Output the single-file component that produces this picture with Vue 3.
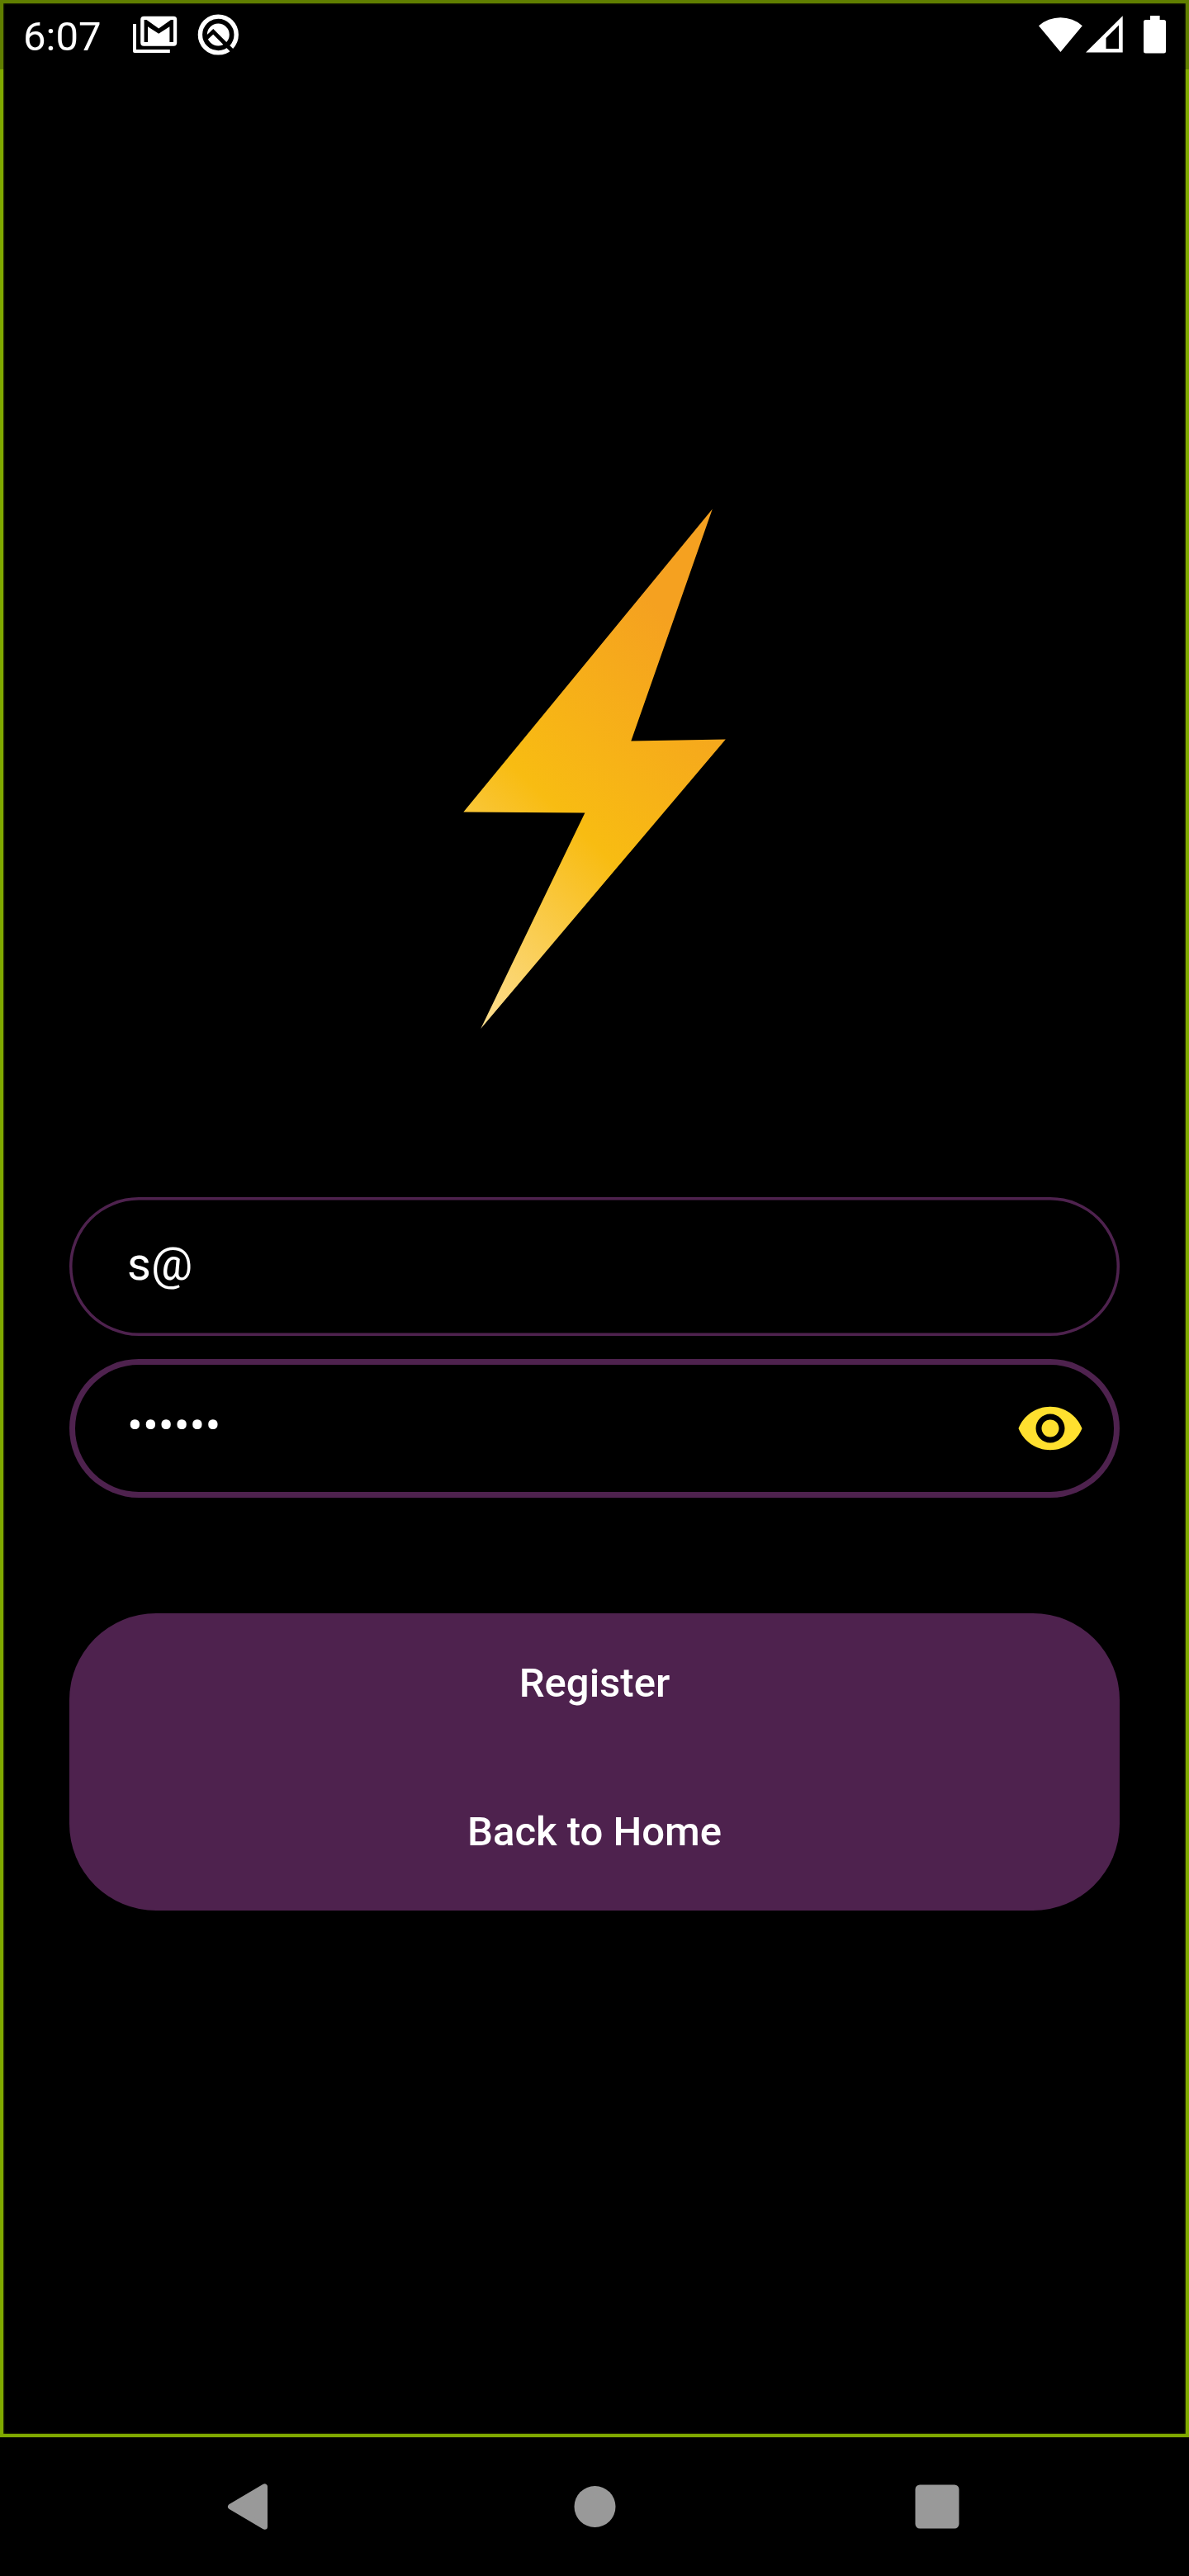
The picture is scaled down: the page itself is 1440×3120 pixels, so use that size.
<script setup>
import { ref } from 'vue'

const time = '6:07'
const email = ref('s@')
const password = ref('••••••')
const actions = ['Register', 'Back to Home']
</script>

<template>
  <div class="device">
    <div class="screen">
      <header class="status">
        <span class="time">{{ time }}</span>
        <svg class="mail" width="54" height="46" viewBox="0 0 54 46">
          <path d="M2 10V42.9H44.8" fill="none" stroke="#fff" stroke-width="4" stroke-linejoin="round" />
          <rect x="9.2" y=".8" width="44" height="36" rx="4" fill="#fff" />
          <path d="M13.6 32V5H16.5L31.2 15.4 46 5H49V32H44.4V13.2L31.2 21.8 18 13.2V32Z" fill="#000" />
        </svg>
        <svg class="q" width="50" height="50" viewBox="0 0 50 50">
          <circle cx="25.3" cy="25" r="21.9" fill="none" stroke="#fff" stroke-width="5.4" />
          <circle cx="25.3" cy="25" r="13.5" fill="#fff" />
          <path d="M10.5 29.5L19.2 21.4 43 45.2" fill="none" stroke="#000" stroke-width="4.8" />
        </svg>
        <span class="spacer"></span>
        <svg width="156" height="46" viewBox="0 0 156 46" fill="#fff">
          <path d="M27.4 44L1 12.2A40 40 0 0 1 53.8 12.2Z" />
          <path fill-rule="evenodd" d="M58 44.5L102.7.2V44.5ZM82.5 27V40H98V11.5Z" />
          <path d="M136 0H147.6V5H152.5A2.5 2.5 0 0 1 155 7.5V43A2.5 2.5 0 0 1 152.5 45.5H130.5A2.5 2.5 0 0 1 128 43V7.5A2.5 2.5 0 0 1 130.5 5H136Z" />
        </svg>
      </header>

      <main class="content">
        <svg class="bolt" width="318" height="632" viewBox="561 615 318 632">
          <defs>
            <linearGradient id="boltFill" gradientUnits="userSpaceOnUse" x1="582" y1="1246" x2="941" y2="874">
              <stop offset="0" stop-color="#fcde91" />
              <stop offset=".495" stop-color="#f8bc12" />
              <stop offset="1" stop-color="#f5a120" />
            </linearGradient>
          </defs>
          <path d="M862.8 616.5L764.3 897.6 878.8 895.4 582.2 1246 708.4 984.4 561.3 983.6Z" fill="url(#boltFill)" />
        </svg>

        <div class="field">
          <span class="value">{{ email }}</span>
        </div>
        <div class="field focused">
          <span class="value">{{ password }}</span>
          <svg class="eye" width="84" height="84" viewBox="0 0 24 24">
            <path fill="#ffe02f" d="M12 4.5C7 4.5 2.73 7.61 1 12c1.73 4.39 6 7.5 11 7.5s9.27-3.11 11-7.5c-1.73-4.39-6-7.5-11-7.5zM12 17c-2.76 0-5-2.24-5-5s2.24-5 5-5 5 2.24 5 5-2.24 5-5 5zm0-8c-1.66 0-3 1.34-3 3s1.34 3 3 3 3-1.34 3-3-1.34-3-3-3z" />
          </svg>
        </div>

        <div class="actions">
          <button v-for="label in actions" :key="label" type="button">{{ label }}</button>
        </div>
      </main>
      <div class="glow"></div>
      <div class="scrim"></div>
    </div>

    <nav class="nav">
      <svg width="56" height="60" viewBox="0 0 56 60">
        <path d="M7.5 30L48.5 5.8V54.2Z" fill="#999" stroke="#999" stroke-width="7" stroke-linejoin="round" />
      </svg>
      <svg width="56" height="60" viewBox="0 0 56 60"><circle cx="30.5" cy="30" r="25" fill="#999" /></svg>
      <svg width="56" height="60" viewBox="0 0 56 60"><rect x="1.5" y="3.5" width="53" height="53" rx="5.5" fill="#999" /></svg>
    </nav>
  </div>
</template>

<style>
body {
  margin: 0;
  background: #000;
}
</style>

<style scoped>
.device {
  width: 1440px;
  height: 3120px;
  display: flex;
  flex-direction: column;
  background: #000;
  color: #fff;
  font-family: Roboto, sans-serif;
}
.screen {
  position: relative;
  height: 2952px;
  display: flex;
  flex-direction: column;
}
.status {
  height: 84px;
  box-sizing: border-box;
  display: flex;
  align-items: flex-start;
  padding: 19px 27px 0 28px;
}
.status svg {
  flex: none;
}
.time {
  width: 133px;
  margin-top: -3px;
  font-size: 49px;
  line-height: 57px;
}
.q {
  margin: -2px 0 0 24px;
}
.spacer {
  flex: 1;
}
.content {
  flex: 1;
  display: flex;
  flex-direction: column;
  align-items: stretch;
  padding: 531px 84px 0;
}
.bolt {
  align-self: center;
  margin-bottom: 202.75px;
}
.field {
  height: 168px;
  margin-bottom: 28px;
  box-sizing: border-box;
  border-radius: 84px;
  box-shadow: inset 0 0 0 3.5px #4e224e;
  display: flex;
  align-items: center;
  justify-content: space-between;
  padding: 0 42px 0 70px;
}
.field.focused {
  box-shadow: inset 0 0 0 7px #4e224e;
}
.value {
  margin-bottom: 6px;
  font-size: 56px;
  line-height: 66px;
}
.actions {
  box-sizing: border-box;
  margin-top: 112px;
  padding-top: 1.75px;
  height: 360.5px;
  border-radius: 105px;
  background: #4e224e;
  display: flex;
  flex-direction: column;
  align-items: center;
}
button {
  height: 168px;
  margin-bottom: 13px;
  padding: 0;
  border: 0;
  background: none;
  color: #fff;
  font: 500 49px/57px Roboto, sans-serif;
}
.glow {
  position: absolute;
  inset: 0;
  border: 4px solid #80a900;
  box-shadow: inset 0 0 2px #80a900;
  pointer-events: none;
}
.scrim {
  position: absolute;
  inset: 0 0 auto;
  height: 84px;
  background: #000;
  opacity: .25;
  clip-path: polygon(0 0, 100% 0, 100% 100%, 1434px 100%, 1434px 6px, 6px 6px, 6px 100%, 0 100%);
  pointer-events: none;
}
.nav {
  flex: 1;
  display: flex;
  align-items: center;
  justify-content: space-between;
  padding: 0 277px 0 272px;
}
</style>
